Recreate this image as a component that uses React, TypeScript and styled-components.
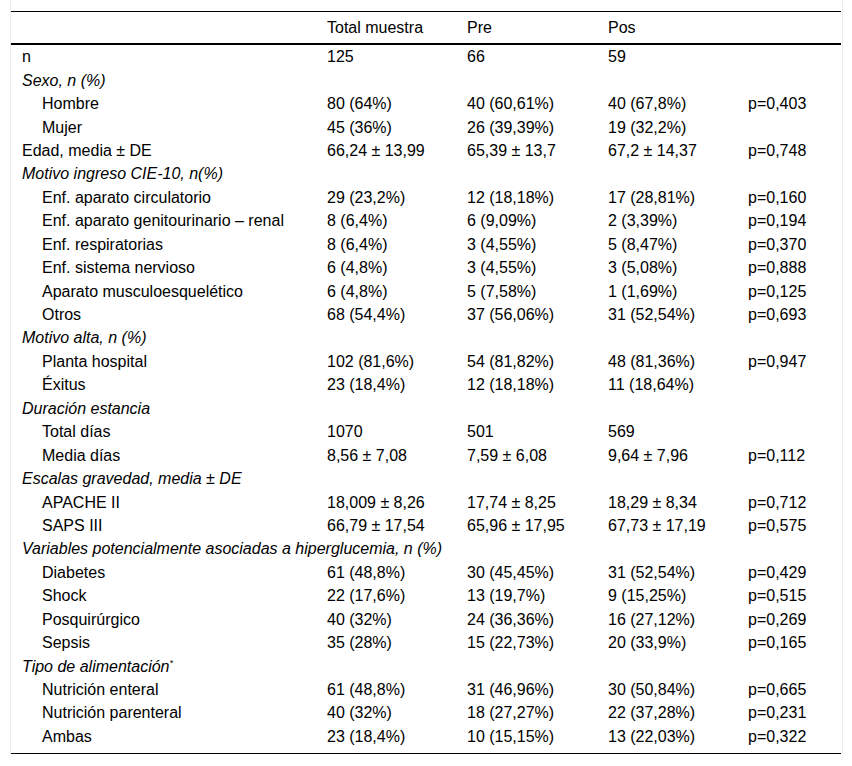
import React from 'react';
import styled, { createGlobalStyle } from 'styled-components';

type Row = {
  label: string;
  kind: 'plain' | 'section' | 'item';
  total?: string;
  pre?: string;
  pos?: string;
  p?: string;
  sup?: string;
};

const rows: Row[] = [
  { label: 'n', kind: 'plain', total: '125', pre: '66', pos: '59' },
  { label: 'Sexo, n (%)', kind: 'section' },
  { label: 'Hombre', kind: 'item', total: '80 (64%)', pre: '40 (60,61%)', pos: '40 (67,8%)', p: 'p=0,403' },
  { label: 'Mujer', kind: 'item', total: '45 (36%)', pre: '26 (39,39%)', pos: '19 (32,2%)' },
  { label: 'Edad, media ± DE', kind: 'plain', total: '66,24 ± 13,99', pre: '65,39 ± 13,7', pos: '67,2 ± 14,37', p: 'p=0,748' },
  { label: 'Motivo ingreso CIE-10, n(%)', kind: 'section' },
  { label: 'Enf. aparato circulatorio', kind: 'item', total: '29 (23,2%)', pre: '12 (18,18%)', pos: '17 (28,81%)', p: 'p=0,160' },
  { label: 'Enf. aparato genitourinario – renal', kind: 'item', total: '8 (6,4%)', pre: '6 (9,09%)', pos: '2 (3,39%)', p: 'p=0,194' },
  { label: 'Enf. respiratorias', kind: 'item', total: '8 (6,4%)', pre: '3 (4,55%)', pos: '5 (8,47%)', p: 'p=0,370' },
  { label: 'Enf. sistema nervioso', kind: 'item', total: '6 (4,8%)', pre: '3 (4,55%)', pos: '3 (5,08%)', p: 'p=0,888' },
  { label: 'Aparato musculoesquelético', kind: 'item', total: '6 (4,8%)', pre: '5 (7,58%)', pos: '1 (1,69%)', p: 'p=0,125' },
  { label: 'Otros', kind: 'item', total: '68 (54,4%)', pre: '37 (56,06%)', pos: '31 (52,54%)', p: 'p=0,693' },
  { label: 'Motivo alta, n (%)', kind: 'section' },
  { label: 'Planta hospital', kind: 'item', total: '102 (81,6%)', pre: '54 (81,82%)', pos: '48 (81,36%)', p: 'p=0,947' },
  { label: 'Éxitus', kind: 'item', total: '23 (18,4%)', pre: '12 (18,18%)', pos: '11 (18,64%)' },
  { label: 'Duración estancia', kind: 'section' },
  { label: 'Total días', kind: 'item', total: '1070', pre: '501', pos: '569' },
  { label: 'Media días', kind: 'item', total: '8,56 ± 7,08', pre: '7,59 ± 6,08', pos: '9,64 ± 7,96', p: 'p=0,112' },
  { label: 'Escalas gravedad, media ± DE', kind: 'section' },
  { label: 'APACHE II', kind: 'item', total: '18,009 ± 8,26', pre: '17,74 ± 8,25', pos: '18,29 ± 8,34', p: 'p=0,712' },
  { label: 'SAPS III', kind: 'item', total: '66,79 ± 17,54', pre: '65,96 ± 17,95', pos: '67,73 ± 17,19', p: 'p=0,575' },
  { label: 'Variables potencialmente asociadas a hiperglucemia, n (%)', kind: 'section' },
  { label: 'Diabetes', kind: 'item', total: '61 (48,8%)', pre: '30 (45,45%)', pos: '31 (52,54%)', p: 'p=0,429' },
  { label: 'Shock', kind: 'item', total: '22 (17,6%)', pre: '13 (19,7%)', pos: '9 (15,25%)', p: 'p=0,515' },
  { label: 'Posquirúrgico', kind: 'item', total: '40 (32%)', pre: '24 (36,36%)', pos: '16 (27,12%)', p: 'p=0,269' },
  { label: 'Sepsis', kind: 'item', total: '35 (28%)', pre: '15 (22,73%)', pos: '20 (33,9%)', p: 'p=0,165' },
  { label: 'Tipo de alimentación', kind: 'section', sup: '*' },
  { label: 'Nutrición enteral', kind: 'item', total: '61 (48,8%)', pre: '31 (46,96%)', pos: '30 (50,84%)', p: 'p=0,665' },
  { label: 'Nutrición parenteral', kind: 'item', total: '40 (32%)', pre: '18 (27,27%)', pos: '22 (37,28%)', p: 'p=0,231' },
  { label: 'Ambas', kind: 'item', total: '23 (18,4%)', pre: '10 (15,15%)', pos: '13 (22,03%)', p: 'p=0,322' },
];

export default function App() {
  return (
    <>
      <GlobalStyle />
      <Frame>
        <Table>
          <colgroup>
            <col style={{ width: 305 }} />
            <col style={{ width: 140 }} />
            <col style={{ width: 141 }} />
            <col style={{ width: 140 }} />
            <col />
          </colgroup>
          <thead>
            <tr>
              <HeadCell />
              <HeadCell>Total muestra</HeadCell>
              <HeadCell>Pre</HeadCell>
              <HeadCell>Pos</HeadCell>
              <HeadCell />
            </tr>
          </thead>
          <tbody>
            {rows.map((r, i) => {
              const last = i === rows.length - 1;
              if (r.kind === 'section') {
                return (
                  <tr key={i}>
                    <SectionCell colSpan={5} $last={last}>
                      {r.label}
                      {r.sup && <Sup>{r.sup}</Sup>}
                    </SectionCell>
                  </tr>
                );
              }
              return (
                <tr key={i}>
                  <LabelCell $indent={r.kind === 'item'} $last={last}>
                    {r.label}
                  </LabelCell>
                  <Cell $last={last}>{r.total}</Cell>
                  <Cell $last={last}>{r.pre}</Cell>
                  <Cell $last={last}>{r.pos}</Cell>
                  <Cell $last={last}>{r.p}</Cell>
                </tr>
              );
            })}
          </tbody>
        </Table>
      </Frame>
    </>
  );
}

const GlobalStyle = createGlobalStyle`
  body {
    margin: 0;
    background: #ffffff;
    font-family: "Liberation Sans", Arial, sans-serif;
    color: #000;
  }
`;

const Frame = styled.div`
  margin: 0 9px 0 10px;
  padding-top: 11px;
  border-left: 1px solid #ececec;
  border-right: 1px solid #ececec;
`;

const Table = styled.table`
  width: 830px;
  border-collapse: collapse;
  table-layout: fixed;
  font-size: 16px;
  border-top: 1px solid #000;
  border-bottom: 1px solid #000;
`;

const HeadCell = styled.th`
  height: 31px;
  padding: 0 10px 0 11px;
  text-align: left;
  font-weight: normal;
  vertical-align: middle;
  border-bottom: 2px solid #000;
  white-space: nowrap;
`;

const Cell = styled.td<{ $last?: boolean }>`
  height: 23.45px;
  padding: 0 10px 0 11px;
  padding-bottom: ${(p) => (p.$last ? '5px' : '0')};
  vertical-align: middle;
  white-space: nowrap;
  line-height: 17px;
`;

const LabelCell = styled(Cell)<{ $indent?: boolean }>`
  padding-left: ${(p) => (p.$indent ? '31px' : '11px')};
`;

const SectionCell = styled(Cell)`
  font-style: italic;
`;

const Sup = styled.sup`
  font-size: 9px;
  line-height: 0;
  vertical-align: 6px;
`;
